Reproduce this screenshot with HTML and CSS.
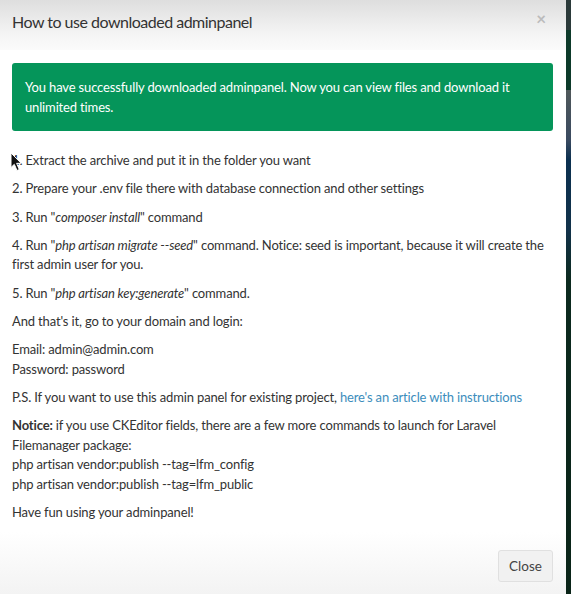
FILE: index.html
```html
<!DOCTYPE html>
<html>
<head>
<meta charset="utf-8">
<link rel="stylesheet" href="styles.css">
</head>
<body>
<div class="page">
  <div class="modal">
    <div class="modal-header">
      <h4 class="modal-title">How to use downloaded adminpanel</h4>
      <span class="close">×</span>
    </div>
    <div class="modal-body">
      <div class="alert">You have successfully downloaded adminpanel. Now you can view files and download it unlimited times.</div>
      <p class="first">1. Extract the archive and put it in the folder you want
        <svg class="cursor" width="13" height="20" viewBox="0 0 13 20"><path d="M1 1 L1 15.5 L4.3 12.3 L7 18.5 L9.3 17.5 L6.6 11.3 L11.2 11.3 Z" fill="#111" stroke="#fff" stroke-width="1"/></svg>
      </p>
      <p>2. Prepare your .env file there with database connection and other settings</p>
      <p>3. Run "<em>composer install</em>" command</p>
      <p>4. Run "<em>php artisan migrate --seed</em>" command. Notice: seed is important, because it will create the first admin user for you.</p>
      <p>5. Run "<em>php artisan key:generate</em>" command.</p>
      <p>And that's it, go to your domain and login:</p>
      <p>Email: admin@admin.com<br>Password: password</p>
      <p>P.S. If you want to use this admin panel for existing project, <a href="#">here's an article with instructions</a></p>
      <p><strong>Notice:</strong> if you use CKEditor fields, there are a few more commands to launch for Laravel Filemanager package:<br>php artisan vendor:publish --tag=lfm_config<br>php artisan vendor:publish --tag=lfm_public</p>
      <p>Have fun using your adminpanel!</p>
    </div>
    <div class="modal-footer">
      <button class="btn">Close</button>
    </div>
  </div>
  <div class="side"></div>
</div>
</body>
</html>
```
FILE: styles.css
```css
* { box-sizing: border-box; }
html, body { margin: 0; padding: 0; }
body {
  width: 571px;
  height: 594px;
  overflow: hidden;
  background: #0e2a22;
  font-family: Lato, "Open Sans", sans-serif;
  color: #333;
}
.page {
  display: flex;
  height: 594px;
}
.modal {
  width: 566px;
  height: 594px;
  background: #fff;
  display: flex;
  flex-direction: column;
}
.side {
  flex: 1;
  background: linear-gradient(#2b3a3a 0, #2b3a3a 30px, #0d3a2a 30px, #0d3a2a 90px, #50585a 90px, #3a4a60 140px, #0b3050 160px, #12324a 230px, #0c2a1f 280px, #0a2418 594px);
}
.modal-header {
  height: 50px;
  flex: none;
  display: flex;
  align-items: flex-start;
  justify-content: space-between;
  padding: 11px 12px 0 12px;
  background: linear-gradient(#dedede, #f5f5f5 35px, #fff 60px);
}
.modal-title {
  margin: 0;
  font-size: 16px;
  letter-spacing: -0.5px;
  font-weight: 400;
  color: #333;
  line-height: 22px;
}
.close {
  font-size: 17px;
  color: #bbb;
  line-height: 18px;
  margin-right: 8px;
  margin-top: -1px;
  font-weight: 700;
}
.modal-body {
  padding: 13px 13px 0 12px;
  flex: 1;
  min-height: 0;
  overflow: hidden;
  font-size: 13px;
  letter-spacing: -0.15px;
  line-height: 19.5px;
  background: #fff;
}
.alert {
  background: #05955a;
  color: #fff;
  border-radius: 3px;
  padding: 15px 14px 14px 13px;
  margin-bottom: 20px;
  line-height: 19.5px;
}
p {
  margin: 0 0 8.8px 0;
}
p.first { position: relative; }
.cursor {
  position: absolute;
  left: -2px;
  top: 1px;
}
a { color: #3c8dbc; text-decoration: none; }
strong { font-weight: 700; }
.modal-footer {
  height: 62px;
  flex: none;
  display: flex;
  justify-content: flex-end;
  align-items: flex-start;
  padding: 18px 13px 0 0;
  background: linear-gradient(#fff, #f3f3f3);
}
.btn {
  font-family: inherit;
  font-size: 13.5px;
  color: #444;
  background: #f1f1f1;
  border: 1px solid #e0e0e0;
  border-radius: 3px;
  width: 55px;
  height: 32px;
  padding: 0;
}
```
